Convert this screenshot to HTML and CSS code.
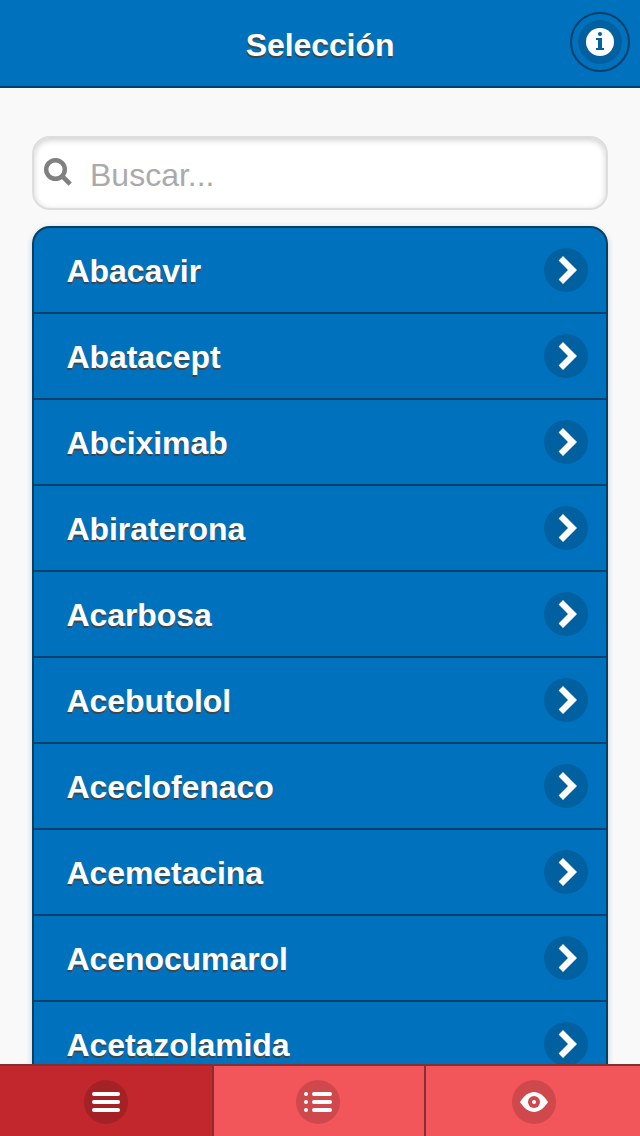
FILE: index.html
```html
<!DOCTYPE html>
<html lang="es">
<head>
  <meta charset="UTF-8" />
  <title>Selección</title>
  <link rel="stylesheet" href="styles.css">
</head>
<body>

  <!-- Shared icons -->
  <svg class="hidden">
    <symbol id="arrow" viewBox="0 0 44 44">
      <path d="M19 8 L33 22 L19 36 L14.6 31.6 L24 22 L14.6 12.4z" fill="#fff" />
    </symbol>
  </svg>

  <!-- Header -->
  <header class="header">
    <h1>Selección</h1>
    <a href="#" class="info-btn" aria-label="Info">
      <span class="disc">
        <svg viewBox="0 0 44 44">
          <circle cx="22" cy="22" r="14" fill="#fff" />
          <circle cx="22" cy="14" r="2.1" fill="#0062a0" />
          <path d="M18 18h6v10h2v2h-8v-2h2v-8h-2z" fill="#0062a0" />
        </svg>
      </span>
    </a>
  </header>

  <!-- Drug list -->
  <main class="content">
    <div class="search">
      <svg viewBox="0 0 30 30">
        <circle cx="12.5" cy="12.5" r="9.3" fill="none" stroke="#808080" stroke-width="4.4" />
        <path d="M18.7 18.7 L27.2 27.2" stroke="#808080" stroke-width="4.6" />
      </svg>
      <input type="text" placeholder="Buscar..." />
    </div>

    <ul class="list">
      <li><a href="#">Abacavir <span class="disc"><svg><use href="#arrow" /></svg></span></a></li>
      <li><a href="#">Abatacept <span class="disc"><svg><use href="#arrow" /></svg></span></a></li>
      <li><a href="#">Abciximab <span class="disc"><svg><use href="#arrow" /></svg></span></a></li>
      <li><a href="#">Abiraterona <span class="disc"><svg><use href="#arrow" /></svg></span></a></li>
      <li><a href="#">Acarbosa <span class="disc"><svg><use href="#arrow" /></svg></span></a></li>
      <li><a href="#">Acebutolol <span class="disc"><svg><use href="#arrow" /></svg></span></a></li>
      <li><a href="#">Aceclofenaco <span class="disc"><svg><use href="#arrow" /></svg></span></a></li>
      <li><a href="#">Acemetacina <span class="disc"><svg><use href="#arrow" /></svg></span></a></li>
      <li><a href="#">Acenocumarol <span class="disc"><svg><use href="#arrow" /></svg></span></a></li>
      <li><a href="#">Acetazolamida <span class="disc"><svg><use href="#arrow" /></svg></span></a></li>
    </ul>
  </main>

  <!-- Footer tabs -->
  <nav class="footer">
    <a href="#" class="active" aria-label="Selección">
      <span class="disc">
        <svg viewBox="0 0 44 44" fill="#fff">
          <rect x="8" y="12" width="28" height="4" rx="2" />
          <rect x="8" y="20" width="28" height="4" rx="2" />
          <rect x="8" y="28" width="28" height="4" rx="2" />
        </svg>
      </span>
    </a>
    <a href="#" class="middle" aria-label="Lista">
      <span class="disc">
        <svg viewBox="0 0 44 44" fill="#fff">
          <circle cx="10" cy="14" r="2" />
          <circle cx="10" cy="22" r="2" />
          <circle cx="10" cy="30" r="2" />
          <rect x="16" y="12" width="20" height="4" rx="2" />
          <rect x="16" y="20" width="20" height="4" rx="2" />
          <rect x="16" y="28" width="20" height="4" rx="2" />
        </svg>
      </span>
    </a>
    <a href="#" aria-label="Ver">
      <span class="disc">
        <svg viewBox="0 0 44 44">
          <path d="M8 22 C12 15.5 17 12 22 12 S32 15.5 36 22 C32 28.5 27 32 22 32 S12 28.5 8 22z" fill="#fff" />
          <circle cx="22" cy="22" r="6" fill="#cc494d" />
          <circle cx="22" cy="22" r="2" fill="#fff" />
        </svg>
      </span>
    </a>
  </nav>

</body>
</html>
```
FILE: styles.css
```css
* {
  box-sizing: border-box;
}

body {
  margin: 0;
  height: 100vh;
  display: flex;
  flex-direction: column;
  overflow: hidden;
  font-family: "Liberation Sans", Helvetica, Arial, sans-serif;
  font-size: 32px;
  background-color: #f9f9f9;
}

a {
  color: #fff;
  text-decoration: none;
}

.hidden {
  display: none;
}

.disc {
  display: block;
  width: 44px;
  height: 44px;
  border-radius: 50%;
  background: rgba(0, 0, 0, 0.15);
  flex-shrink: 0;
}

.disc svg {
  display: block;
  width: 44px;
  height: 44px;
}

.header {
  display: grid;
  grid-template-columns: 60px 1fr 60px;
  flex-shrink: 0;
  height: 88px;
  padding: 12px 10px 0;
  background: #0071bc;
  border-bottom: 2px solid #00406b;
}

.header h1 {
  grid-column: 2;
  margin: 0;
  font-size: 32px;
  line-height: 66px;
  letter-spacing: -0.08px;
  text-align: center;
  color: #fff;
  text-shadow: 0 2px 0 #444;
}

.info-btn {
  display: flex;
  align-items: center;
  justify-content: center;
  width: 60px;
  height: 60px;
  border: 2px solid #00406b;
  border-radius: 50%;
}

.content {
  flex: 1;
  min-height: 0;
  overflow: hidden;
  padding: 48px 32px 0;
}

.search {
  display: flex;
  align-items: center;
  height: 74px;
  margin-bottom: 16px;
  padding: 0 9px;
  background: #fff;
  border: 2px solid #ddd;
  border-radius: 18px;
  box-shadow: inset 0 2px 6px rgba(0, 0, 0, 0.2);
}

.search svg {
  width: 30px;
  height: 30px;
  margin-bottom: 2px;
}

.search input {
  flex: 1;
  height: 70px;
  margin: 0;
  padding: 4px 0 0 17px;
  border: none;
  outline: none;
  background: transparent;
  font: inherit;
}

.search input::placeholder {
  color: #aaa;
}

.list {
  margin: 0;
  padding: 0;
  list-style: none;
  background: #0071bc;
  border: 2px solid #00406b;
  border-radius: 18px;
  box-shadow: 0 2px 6px rgba(0, 0, 0, 0.2);
}

.list a {
  display: flex;
  align-items: center;
  justify-content: space-between;
  height: 86px;
  padding: 2px 18px 0 32.5px;
  border-bottom: 2px solid #00406b;
  font-weight: bold;
  line-height: 82px;
  letter-spacing: -0.08px;
  text-shadow: 0 2px 0 #444;
}

.list .disc {
  margin-bottom: 2px;
}

.footer {
  display: grid;
  grid-template-columns: 214px 212px 214px;
  flex-shrink: 0;
  height: 72px;
  border-top: 2px solid #852f33;
}

.footer a {
  display: flex;
  align-items: center;
  justify-content: center;
  padding-top: 2px;
  background: #f2555a;
  border-right: 2px solid #852f33;
}

.footer .middle {
  padding-right: 2px;
}

.footer a:last-child {
  border-right: none;
  padding-left: 2px;
}

.footer .active {
  background: #c1272d;
}
```
